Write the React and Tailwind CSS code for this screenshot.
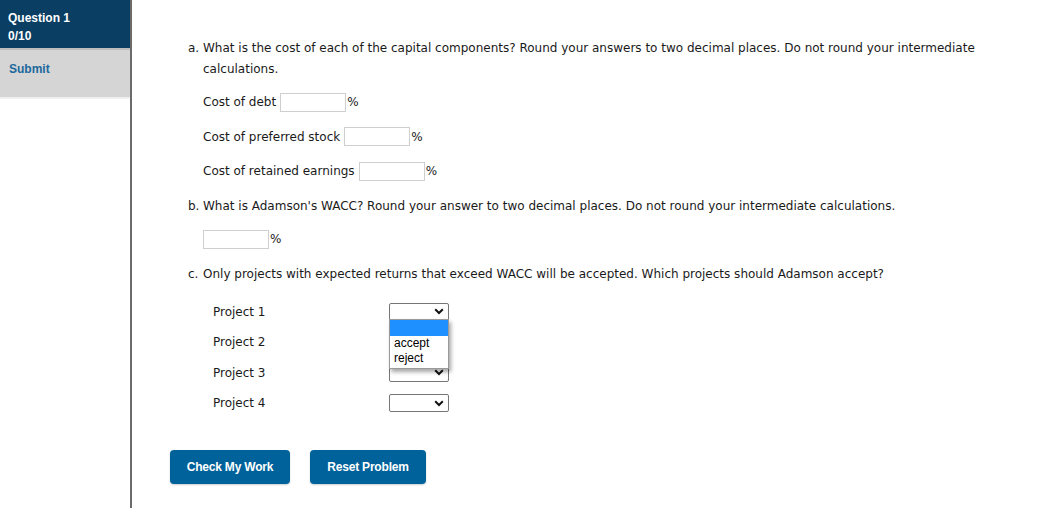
import React from "react";

const body = { fontFamily: '"DejaVu Sans", Verdana, sans-serif' };
const arial = { fontFamily: '"Liberation Sans", Arial, sans-serif' };

const Chevron = () => (
  <svg width="10" height="7" viewBox="0 0 10 7" className="mr-[4px]">
    <path d="M1.2 1.2 L5 5 L8.8 1.2" fill="none" stroke="#111" strokeWidth="2" />
  </svg>
);

const Field = ({ label }) => (
  <div className="flex items-center h-[20px]">
    <span>{label}</span>
    <span className="ml-[4px] w-[66px] h-[19px] border border-[#cfcfcf] bg-white" />
    <span className="ml-[1px]">%</span>
  </div>
);

const Select = ({ open }) => (
  <div className="relative">
    <div className="w-[60px] h-[18px] border border-[#767676] rounded-[2px] bg-white flex items-center justify-end">
      <Chevron />
    </div>
    {open && (
      <div
        className="absolute left-0 top-[16px] w-[60px] border border-[#9a9a9a] bg-white shadow-[2px_3px_4px_rgba(0,0,0,0.35)] z-10 text-[12px] text-black leading-[15.5px]"
        style={arial}
      >
        <div className="h-[16px] bg-[#1e90ff]" />
        <div className="pl-[4px]">accept</div>
        <div className="pl-[4px] pb-[1px]">reject</div>
      </div>
    )}
  </div>
);

const App = () => {
  const projects = ["Project 1", "Project 2", "Project 3", "Project 4"];
  return (
    <div className="flex w-[1049px] h-[508px] bg-white overflow-hidden">
      <div className="w-[132px] shrink-0 border-r-2 border-[#6b6b6b] flex flex-col" style={arial}>
        <div className="h-[48px] bg-[#0a3e63] text-white font-bold text-[12px] leading-[18px] pl-[8px] pt-[9px]">
          <div>Question 1</div>
          <div>0/10</div>
        </div>
        <div className="h-[2px] bg-[#bdbdbd]" />
        <div className="h-[47px] bg-[#d5d5d5] text-[#1b689c] font-bold text-[12px] pl-[9px] pt-[10px]">
          Submit
        </div>
        <div className="h-[2px] bg-[#f0f0f0]" />
      </div>

      <div className="flex-1 pl-[56px] pt-[38px] text-[12px] text-[#1a1a1a]" style={body}>
        <div className="flex leading-[21px]">
          <span className="w-[15px] shrink-0">a.</span>
          <span className="w-[790px]">
            What is the cost of each of the capital components? Round your answers to two decimal places. Do not round your intermediate calculations.
          </span>
        </div>

        <div className="pl-[15px] mt-[12px] flex flex-col gap-[14.5px]">
          <Field label="Cost of debt" />
          <Field label="Cost of preferred stock" />
          <Field label="Cost of retained earnings" />
        </div>

        <div className="flex mt-[15px] leading-[20px]">
          <span className="w-[15px] shrink-0">b.</span>
          <span>What is Adamson's WACC? Round your answer to two decimal places. Do not round your intermediate calculations.</span>
        </div>

        <div className="pl-[15px] mt-[13px] flex items-center h-[20px]">
          <span className="w-[66px] h-[19px] border border-[#cfcfcf] bg-white" />
          <span className="ml-[1px]">%</span>
        </div>

        <div className="flex mt-[15px] leading-[20px]">
          <span className="w-[15px] shrink-0">c.</span>
          <span>Only projects with expected returns that exceed WACC will be accepted. Which projects should Adamson accept?</span>
        </div>

        <div className="pl-[25px] mt-[18px] flex flex-col gap-[11.5px] w-[261px]">
          {projects.map((p, i) => (
            <div key={p} className="flex items-center justify-between h-[19px]">
              <span>{p}</span>
              <Select open={i === 0} />
            </div>
          ))}
        </div>

        <div className="flex gap-[20px] mt-[37px] -ml-[18px]" style={arial}>
          <button className="w-[120px] h-[34px] rounded-[4px] bg-[#00629a] text-white text-[12px] font-bold tracking-[-0.2px] shadow-[0_1px_2px_rgba(0,0,0,0.2)]">
            Check My Work
          </button>
          <button className="w-[116px] h-[34px] rounded-[4px] bg-[#00629a] text-white text-[12px] font-bold tracking-[-0.2px] shadow-[0_1px_2px_rgba(0,0,0,0.2)]">
            Reset Problem
          </button>
        </div>
      </div>
    </div>
  );
};

export default App;
